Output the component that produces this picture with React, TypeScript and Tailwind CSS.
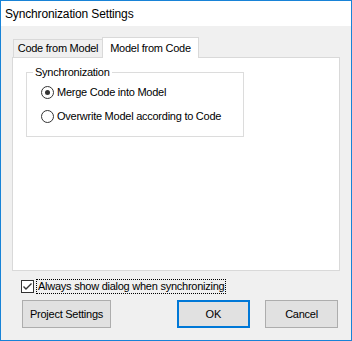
import React from "react";

const font = { fontFamily: '"Liberation Sans", Arial, sans-serif' };

function Radio({ checked, label }: { checked?: boolean; label: string }) {
  return (
    <div className="flex items-center h-[16px] whitespace-nowrap">
      <span className="shrink-0 w-[13px] h-[13px] rounded-full border border-[#333333] bg-white flex items-center justify-center">
        {checked && <span className="w-[5px] h-[5px] rounded-full bg-[#333333]" />}
      </span>
      <span className="ml-[3px] text-[11px] tracking-[-0.25px] text-black leading-none">{label}</span>
    </div>
  );
}

export default function App() {
  return (
    <div
      className="w-[352px] h-[341px] border border-[#1883d7] bg-[#f0f0f0] flex flex-col"
      style={font}
    >
      {/* Title bar */}
      <div className="h-[25px] bg-white flex items-center pl-[4px] text-[12px] tracking-[-0.15px] text-black">
        Synchronization Settings
      </div>

      <div className="flex-1 flex flex-col">
        {/* Tabs */}
        <div className="pt-[11px] pl-[12px] flex items-end h-[31px]">
          <div className="h-[18px] w-[90px] border border-b-0 border-[#d9d9d9] bg-[#f0f0f0] flex items-center justify-center text-[11px] tracking-[-0.25px] text-black">
            Code from Model
          </div>
          <div className="h-[21px] w-[97px] border border-b-0 border-[#d9d9d9] bg-white flex items-center justify-center text-[11px] tracking-[-0.25px] text-black -mb-px relative z-10 -ml-px">
            Model from Code
          </div>
        </div>

        {/* Tab pane */}
        <div className="ml-[11px] w-[328px] h-[214px] border border-[#d9d9d9] bg-white pt-[7px] pl-[13px]">
          <fieldset className="w-[218px] h-[72px] border border-[#dcdcdc] px-[14px] pt-[5px] m-0">
            <legend className="px-[2px] -ml-[8px] text-[11px] tracking-[-0.25px] text-black leading-[14px]">
              Synchronization
            </legend>
            <div className="flex flex-col gap-[8px]">
              <Radio checked label="Merge Code into Model" />
              <Radio label="Overwrite Model according to Code" />
            </div>
          </fieldset>
        </div>

        {/* Checkbox */}
        <div className="mt-[8px] ml-[20px] flex items-center h-[15px] whitespace-nowrap">
          <span className="shrink-0 w-[13px] h-[13px] border border-[#333333] bg-white flex items-center justify-center">
            <svg width="11" height="11" viewBox="0 0 11 11">
              <path d="M1.5 5.5 L4 8 L9.5 2.5" fill="none" stroke="#333333" strokeWidth="1.4" />
            </svg>
          </span>
          <span className="ml-[2px] px-[1px] border border-dotted border-black text-[11px] tracking-[-0.25px] text-black leading-[13px]">
            Always show dialog when synchronizing
          </span>
        </div>

        {/* Buttons */}
        <div className="mt-[6px] flex items-center pl-[21px]">
          <button className="w-[89px] h-[28px] border border-[#adadad] bg-[#e1e1e1] text-[11px] tracking-[-0.25px] text-black">
            Project Settings
          </button>
          <button className="ml-[66px] w-[73px] h-[28px] border-2 border-[#0078d7] bg-[#e1e1e1] text-[11px] text-black">
            OK
          </button>
          <button className="ml-[15px] w-[73px] h-[28px] border border-[#adadad] bg-[#e1e1e1] text-[11px] tracking-[-0.25px] text-black">
            Cancel
          </button>
        </div>
      </div>
    </div>
  );
}
